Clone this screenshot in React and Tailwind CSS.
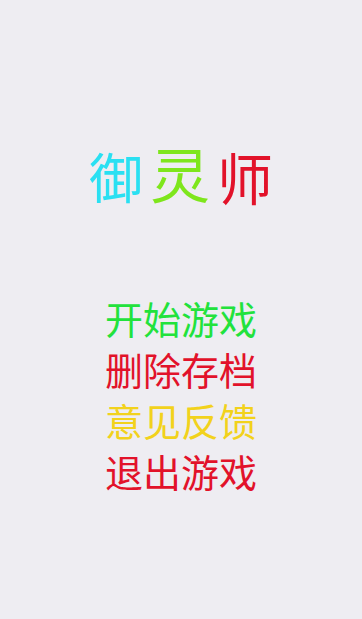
const menu = [
  { label: "开始游戏", color: "text-[#22e23c]" },
  { label: "删除存档", color: "text-[#e2122a]" },
  { label: "意见反馈", color: "text-[#f2d21c]" },
  { label: "退出游戏", color: "text-[#e2122a]" },
];

export default function App() {
  return (
    <div
      className="min-h-screen w-full bg-[#eeedf2] flex flex-col items-center"
      style={{ fontFamily: '"Noto Sans CJK SC", "Noto Sans", sans-serif' }}
    >
      {/* title */}
      <div className="mt-[148px] flex items-center gap-[7px] leading-none">
        <span className="text-[54px] text-[#2ae0f2]">御</span>
        <span className="text-[60px] text-[#7ee61c] -mt-[8px]">灵</span>
        <span className="text-[56px] text-[#e2122a]">师</span>
      </div>

      {/* menu */}
      <div className="mt-[95px] flex flex-col items-center gap-[13px]">
        {menu.map((item) => (
          <button
            key={item.label}
            type="button"
            className={`text-[38px] leading-none ${item.color}`}
          >
            {item.label}
          </button>
        ))}
      </div>
    </div>
  );
}
